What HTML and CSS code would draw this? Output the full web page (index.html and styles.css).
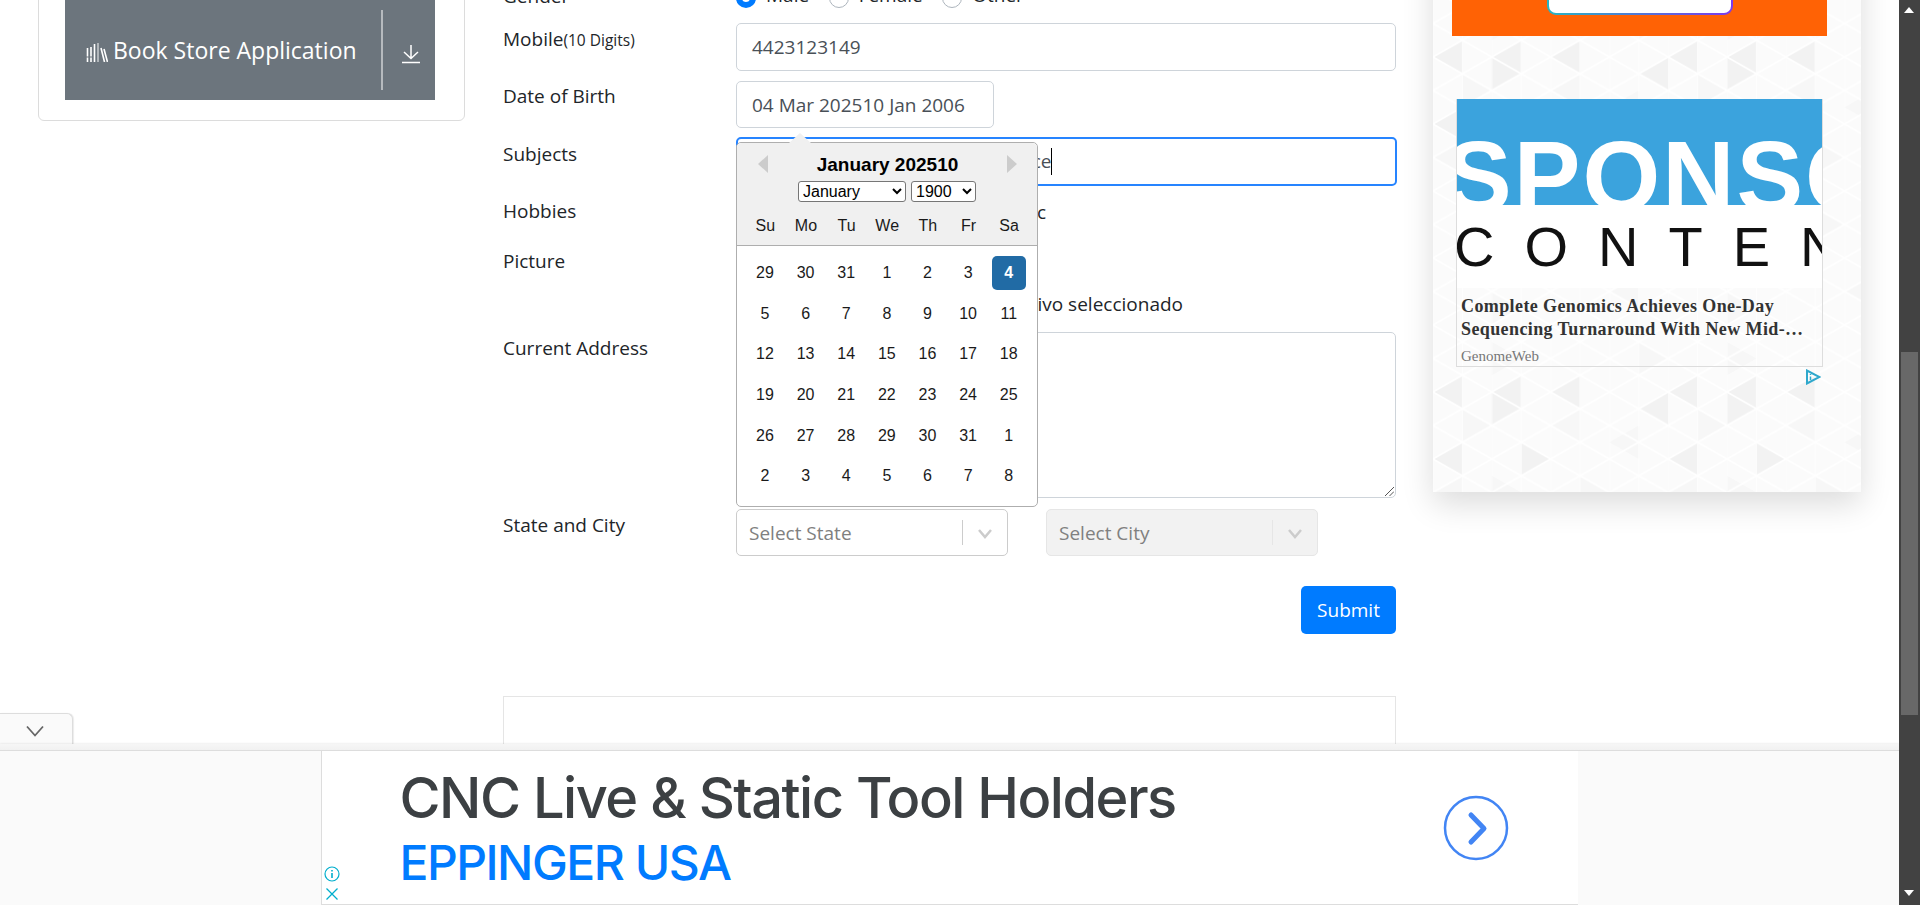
FILE: index.html
```html
<!DOCTYPE html>
<html lang="en">
<head>
<meta charset="utf-8">
<title>Practice Form</title>
<link rel="stylesheet" href="styles.css">
</head>
<body>
<div class="window">
  <div class="viewport">
    <div class="page">
      <aside class="left-col">
        <div class="menu-card">
          <div class="book-item">
            <div class="book-link">
              <svg class="books-icon" viewBox="0 0 22 20" width="22" height="20"><g fill="none" stroke="#fff" stroke-width="1.6"><path d="M1.5 6v14M5 5v15M8.5 2v18"/><path d="M12 1v19" stroke-opacity=".6"/><path d="M15 6l3.5 14M18 7l3.5 13"/><path d="M0 15h6" stroke="#6c757d" stroke-width="1"/></g></svg>
              <span>Book Store Application</span>
            </div>
            <div class="download">
              <svg viewBox="0 0 18 20" width="18" height="20"><path d="M9 1v13M2 8l7 6.500 7-6.500M0 18.500h18" fill="none" stroke="#fff" stroke-width="1.500"/></svg>
            </div>
          </div>
        </div>
      </aside>

      <main class="form-col">
        <div class="row row-gender">
          <label class="label">Gender</label>
          <div class="radios">
            <span class="radio-item"><span class="radio radio-on"></span>Male</span>
            <span class="radio-item"><span class="radio"></span>Female</span>
            <span class="radio-item"><span class="radio"></span>Other</span>
          </div>
        </div>
        <div class="row">
          <label class="label">Mobile<small class="hint">(10 Digits)</small></label>
          <div class="field field-full">4423123149</div>
        </div>
        <div class="row row-dob">
          <label class="label label-tight">Date of Birth</label>
          <div class="dob-wrap">
            <div class="field field-dob">04 Mar 202510 Jan 2006</div>
            <div class="datepicker">
              <span class="dp-caret"></span>
              <div class="dp-head">
                <div class="dp-title-row">
                  <span class="dp-nav dp-prev"></span>
                  <span class="dp-title">January 202510</span>
                  <span class="dp-nav dp-next"></span>
                </div>
                <div class="dp-selects">
                  <select class="dp-month"><option>January</option></select>
                  <select class="dp-year"><option>1900</option></select>
                </div>
                <div class="dp-week">
                  <span>Su</span><span>Mo</span><span>Tu</span><span>We</span><span>Th</span><span>Fr</span><span>Sa</span>
                </div>
              </div>
              <div class="dp-body">
                <span>29</span><span>30</span><span>31</span><span>1</span><span>2</span><span>3</span><span class="dp-selected">4</span>
                <span>5</span><span>6</span><span>7</span><span>8</span><span>9</span><span>10</span><span>11</span>
                <span>12</span><span>13</span><span>14</span><span>15</span><span>16</span><span>17</span><span>18</span>
                <span>19</span><span>20</span><span>21</span><span>22</span><span>23</span><span>24</span><span>25</span>
                <span>26</span><span>27</span><span>28</span><span>29</span><span>30</span><span>31</span><span>1</span>
                <span>2</span><span>3</span><span>4</span><span>5</span><span>6</span><span>7</span><span>8</span>
              </div>
            </div>
          </div>
        </div>
        <div class="row row-subjects">
          <label class="label label-low">Subjects</label>
          <div class="field field-full field-focus"><span class="typed">Science</span><span class="caret"></span></div>
        </div>
        <div class="row row-hobbies">
          <label class="label">Hobbies</label>
          <div class="hobby-list"><span>Sports</span><span>Reading</span><span>Music</span></div>
        </div>
        <div class="row row-picture">
          <label class="label label-tight">Picture</label>
          <div class="file-line"><span>Seleccionar</span><span>Ningún archivo seleccionado</span></div>
        </div>
        <div class="row">
          <label class="label">Current Address</label>
          <div class="field field-full field-area">
            <svg class="grip" viewBox="0 0 10 10" width="10" height="10"><path d="M1 10L10 1M5.500 10L10 5.500" stroke="#555" stroke-width="1" fill="none"/></svg>
          </div>
        </div>
        <div class="row row-state">
          <label class="label">State and City</label>
          <div class="selects">
            <div class="rselect">
              <span class="rselect-text">Select State</span>
              <span class="rselect-sep"></span>
              <svg class="rselect-chevron" viewBox="0 0 20 20" width="20" height="20"><path d="M4 7l6 7 6-7" fill="none" stroke="#ccc" stroke-width="2.500"/></svg>
            </div>
            <div class="rselect rselect-off">
              <span class="rselect-text">Select City</span>
              <span class="rselect-sep"></span>
              <svg class="rselect-chevron" viewBox="0 0 20 20" width="20" height="20"><path d="M4 7l6 7 6-7" fill="none" stroke="#ccc" stroke-width="2.500"/></svg>
            </div>
          </div>
        </div>
        <div class="submit-row"><button class="submit">Submit</button></div>
        <div class="empty-box"></div>
      </main>

      <aside class="ad-card">
        <svg class="pattern" width="100%" height="100%">
          <defs>
            <pattern id="tris" width="235.2" height="335" patternUnits="userSpaceOnUse" patternTransform="translate(0 100)">
              <g fill="#f2f2f2">
                <path d="M0 57L29.400 40.250V73.750z"/>
                <path d="M58.800 57L88.200 40.250V73.750z"/>
                <path d="M117.600 57L147 40.250V73.750z"/>
                <path d="M58.800 57V90.500L88.200 73.750z"/>
                <path d="M205.800 73.750L235.200 57V90.500z"/>
                <path d="M88.200 107.250V140.750L117.600 124z"/>
                <path d="M0 124L29.400 107.250V140.750z"/>
              </g>
              <g fill="#f7f7f7">
                <path d="M58.800 140.750V174.250L88.200 157.500z"/>
                <path d="M0 157.500L29.400 140.750V174.250z"/>
                <path d="M58.800 7V40.250L88.200 23.500z"/>
                <path d="M117.600 90.500L147 73.750V107.250z"/>
                <path d="M176.400 107.250L205.800 90.500V124z"/>
                <path d="M147 140.750V174.250L176.400 157.500z"/>
                <path d="M29.400 207.750L58.800 191V224.500z"/>
                <path d="M205.800 224.500L235.200 207.750V241.250z"/>
                <path d="M117.600 258L147 241.250V274.750z"/>
                <path d="M58.800 291.500V325L88.200 308.250z"/>
                <path d="M176.400 291.500L205.800 274.750V308.250z"/>
                <path d="M29.400 73.750V107.250L58.800 90.500z"/>
                <path d="M147 207.750V241.250L176.400 224.500z"/>
                <path d="M88.200 241.250V274.750L117.600 258z"/>
                <path d="M205.800 7V40.250L235.200 23.500z"/>
              </g>
            </pattern>
            <pattern id="grid" width="58.800" height="33.500" patternUnits="userSpaceOnUse" patternTransform="translate(0 123.500)">
              <path d="M0 0L29.400 16.750L58.800 0M0 33.500L29.400 16.750L58.800 33.500" fill="none" stroke="#fff" stroke-width="1.600"/>
              <path d="M0 0V33.500M29.400 0V33.500" fill="none" stroke="#fff" stroke-width="1" stroke-opacity=".7"/>
            </pattern>
          </defs>
          <rect width="100%" height="100%" fill="url(#tris)"/>
          <rect width="100%" height="100%" fill="url(#grid)"/>
        </svg>
        <div class="orange"><div class="orange-btn"></div></div>
        <div class="sponsored">
          <div class="sp-blue"><span>SPONSO</span></div>
          <div class="sp-white"><span>CONTEN</span></div>
          <div class="sp-text">
            <div class="sp-title">Complete Genomics Achieves One-Day Sequencing Turnaround With New Mid-…</div>
            <div class="sp-source">GenomeWeb</div>
          </div>
        </div>
        <div class="adchoice">
          <svg viewBox="0 0 16 16" width="16" height="16"><path d="M2 1.500V14.500L14.500 8z" fill="none" stroke="#2fa8cc" stroke-width="2"/><path d="M5.500 7.500V11M5.500 5v1" stroke="#2fa8cc" stroke-width="1.500" fill="none"/></svg>
        </div>
      </aside>
    </div>

    <div class="bottom-ad">
      <div class="ad-tab">
        <svg viewBox="0 0 20 12" width="20" height="12"><path d="M2 1.500l8 9 8-9" fill="none" stroke="#666" stroke-width="1.800"/></svg>
      </div>
      <div class="ad-strip"></div>
      <div class="ad-bar">
        <div class="ad-banner">
          <div class="ad-marks">
            <svg viewBox="0 0 16 16" width="16" height="16"><circle cx="8" cy="8" r="7" fill="none" stroke="#00aecd" stroke-width="1.200"/><path d="M8 7v5M8 4v1.600" stroke="#00aecd" stroke-width="1.600" fill="none"/></svg>
            <svg viewBox="0 0 14 14" width="14" height="14"><path d="M1.500 1.500l11 11M12.500 1.500l-11 11" stroke="#00aecd" stroke-width="1.300" fill="none"/></svg>
          </div>
          <div class="ad-copy">
            <div class="ad-head">CNC Live &amp; Static Tool Holders</div>
            <div class="ad-brand">EPPINGER USA</div>
          </div>
          <svg class="ad-go" viewBox="0 0 66 66" width="66" height="66"><circle cx="33" cy="33" r="31" fill="none" stroke="#4285f4" stroke-width="2.500"/><path d="M28 20l13 13.500L28 47" fill="none" stroke="#4285f4" stroke-width="5" stroke-linecap="round" stroke-linejoin="round"/></svg>
        </div>
      </div>
    </div>
  </div>

  <div class="scrollbar">
    <span class="sb-up"></span>
    <div class="sb-track"><div class="sb-thumb"></div></div>
    <span class="sb-down"></span>
  </div>
</div>
</body>
</html>
```

FILE: styles.css
```css
* { box-sizing: border-box; }
html, body { margin: 0; height: 905px; overflow: hidden; }
body { font-family: "Open Sans", "Noto Sans", sans-serif; font-size: 19px; line-height: 30px; color: #212529; background: #fff; }

.window { display: flex; width: 1920px; height: 905px; }
.viewport { position: relative; flex: 1; overflow: hidden; }
.page { display: flex; align-items: flex-start; gap: 38px; padding-left: 38px; margin-top: -100px; }

/* left menu */
.left-col { width: 427px; flex: none; }
.menu-card { height: 221px; padding: 0 29px 20px 26px; border: 1px solid #dcdcdc; border-radius: 6px; background: #fff; }
.book-item { display: flex; height: 199px; padding-top: 100px; background: #6c757d; color: #fff; }
.book-link { display: flex; align-items: center; gap: 5px; width: 316px; padding: 0 0 2px 21px; font-size: 23px; }
.books-icon { margin-top: 5px; flex: none; }
.download { display: flex; align-items: center; justify-content: center; flex: 1; height: 80px; margin-top: 9px; border-left: 2px solid #b6babe; }
.download svg { margin-top: 7px; margin-left: 4px; }

/* form */
.form-col { width: 893px; flex: none; padding-top: 80px; }
.row { display: flex; margin-bottom: 10px; }
.label { width: 233px; flex: none; padding-top: 1px; white-space: nowrap; }
.label-tight { padding-top: 0; }
.label-low { padding-top: 2px; }
.hint { font-size: 15.500px; }
.row-gender { height: 33px; }
.radios { display: flex; }
.radio-item { display: flex; align-items: center; gap: 10px; height: 30px; margin-right: 19.500px; }
.radio { width: 20px; height: 20px; margin-top: 5px; border: 1px solid #adb5bd; border-radius: 50%; background: #fff; }
.radio-on { border: 6px solid #007bff; }

.field { height: 47.500px; padding: 8px 15px; border: 1px solid #ced4da; border-radius: 5px; color: #495057; background: #fff; }
.field-full { width: 660px; flex: none; }
.field-dob { width: 258px; white-space: nowrap; }
.row-dob { margin-bottom: 9px; }
.dob-wrap { position: relative; }
.field-focus { display: flex; justify-content: flex-start; width: 661px; height: 49px; padding: 7px 0 7px 247px; border: 2px solid #2684ff; }
.caret { width: 1px; height: 27px; margin-top: 2px; background: #000; }
.row-hobbies { height: 41px; margin-top: -1px; }
.hobby-list { display: flex; justify-content: space-between; width: 310px; padding-top: 2px; }
.row-picture { height: 76px; }
.file-line { display: flex; justify-content: space-between; align-items: flex-end; width: 447px; height: 73px; }
.field-area { position: relative; height: 166px; }
.grip { position: absolute; right: 1px; bottom: 1px; }

.row-state { margin-top: 11px; margin-bottom: 30px; }
.selects { display: flex; gap: 38px; }
.rselect { display: flex; align-items: center; width: 272px; height: 47px; padding-left: 12px; border: 1px solid #ccc; border-radius: 5px; background: #fff; }
.rselect-text { flex: 1; color: #808080; }
.rselect-sep { width: 1px; height: 25px; background: #ccc; }
.rselect-chevron { margin: 0 12px; }
.rselect-off { background: #f2f2f2; border-color: #e6e6e6; }
.rselect-off .rselect-sep { background: #e6e6e6; }

.submit-row { display: flex; justify-content: flex-end; }
.submit { width: 95px; height: 47.500px; padding: 0; border: 0; border-radius: 5px; background: #007bff; color: #fff; font: inherit; }
.empty-box { height: 240px; margin-top: 62px; border: 1px solid #e5e5e5; }

/* date picker */
.datepicker { position: absolute; top: 61px; left: 0; z-index: 5; width: 302px; border: 1px solid #aeaeae; border-radius: 5px; background: #fff; font-family: "Liberation Sans", Arial, sans-serif; font-size: 16px; line-height: 20px; color: #1a1a1a; }
.dp-caret { position: absolute; top: -10px; left: 52px; width: 0; height: 0; border-left: 11px solid transparent; border-right: 11px solid transparent; border-bottom: 10px solid #f0f0f0; }
.dp-head { height: 103px; padding-top: 10px; background: #f0f0f0; border-bottom: 1px solid #aeaeae; border-radius: 5px 5px 0 0; }
.dp-title-row { display: flex; justify-content: space-between; align-items: center; padding: 0 20px 0 21px; height: 24px; }
.dp-title { font-size: 19px; font-weight: 700; color: #000; padding-top: 1px; }
.dp-nav { width: 0; height: 0; border-top: 9px solid transparent; border-bottom: 9px solid transparent; margin-top: -2px; }
.dp-prev { border-right: 10px solid #ccc; }
.dp-next { border-left: 10px solid #ccc; }
.dp-selects { display: flex; justify-content: center; gap: 5px; margin-top: 4px; }
.dp-selects select { height: 21px; padding: 0; font-family: inherit; font-size: 16px; background: #fff; border: 1px solid #767676; border-radius: 3px; color: #000; }
.dp-month { width: 108px; }
.dp-year { width: 65px; }
.dp-week { display: grid; grid-template-columns: repeat(7, 40.640px); padding: 0 8px; margin-top: 14px; text-align: center; }
.dp-body { display: grid; grid-template-columns: repeat(7, 34px); grid-auto-rows: 34px; align-content: start; gap: 6.640px; padding: 10.500px 11px 9px; height: 260px; text-align: center; line-height: 34px; }
.dp-selected { background: #216ba5; color: #fff; font-weight: 700; border-radius: 5px; }

/* right ad column */
.ad-card { position: relative; width: 428px; height: 592px; flex: none; margin-left: -1px; background: #fbfbfb; box-shadow: 0 12px 30px rgba(0,0,0,.14); }
.pattern { position: absolute; inset: 0; }
.orange { position: relative; display: flex; justify-content: center; width: 375px; height: 136px; margin-left: 19px; background: #ff6205; }
.orange-btn { width: 186px; height: 115px; border: 2px solid transparent; border-top: 0; border-radius: 0 0 9px 9px; background: linear-gradient(#fff, #fff) padding-box, linear-gradient(90deg, #28b5c2, #7c3aed) border-box; }
.sponsored { position: relative; width: 367px; height: 268px; margin: 63px 0 0 23px; border: 1px solid #ddd; border-top: 0; font-family: "Liberation Serif", serif; }
.sp-blue { height: 106px; padding-top: 27px; overflow: hidden; background: #3ba3dd; color: #fff; font: 700 100px/1 "Liberation Sans", sans-serif; letter-spacing: 2px; white-space: nowrap; }
.sp-blue span { margin-left: -12px; display: inline-block; }
.sp-white { height: 83px; overflow: hidden; background: #fff; color: #111; font: 400 56px/1 "Liberation Sans", sans-serif; letter-spacing: 30px; white-space: nowrap; padding-top: 14px; }
.sp-white span { display: inline-block; margin-left: -3px; }
.sp-text { padding: 7px 4px 0 4px; }
.sp-title { font-size: 18px; font-weight: 700; line-height: 23px; color: #333; letter-spacing: .4px; }
.sp-source { margin-top: 5px; font-size: 15px; line-height: 20px; color: #777; }
.adchoice { position: relative; display: flex; justify-content: flex-end; width: 388px; margin-top: 2px; line-height: 0; }

/* bottom ad */
.bottom-ad { position: absolute; left: 0; right: 0; bottom: 0; height: 192px; }
.ad-tab { display: flex; justify-content: center; align-items: center; width: 73px; height: 31px; padding: 3px 3px 0 0; border: 1px solid #ddd; border-width: 1px 1px 0 0; border-radius: 0 6px 0 0; background: #fafafa; box-shadow: 1px 0 1px rgba(0,0,0,.08); }
.ad-strip { height: 6px; background: linear-gradient(#f6f6f6, #f1f1f1); box-shadow: 0 -1px 2px rgba(0,0,0,.06); }
.ad-bar { display: flex; justify-content: center; height: 155px; padding-right: 1px; border-top: 1px solid #ddd; background: #fafafa; }
.ad-banner { position: relative; display: flex; align-items: center; width: 1257px; height: 154px; padding-left: 78px; border-left: 1px solid #ddd; border-bottom: 1px solid #ddd; background: #fff; }
.ad-marks { position: absolute; left: 1px; bottom: 3px; display: flex; flex-direction: column; align-items: center; gap: 5px; width: 18px; line-height: 0; }
.ad-copy { flex: none; width: 1043px; padding-bottom: 2px; }
.ad-head { font-family: Inter, sans-serif; font-weight: 500; font-size: 56px; line-height: 72px; color: #3c4043; letter-spacing: -1.500px; white-space: nowrap; }
.ad-brand { font-family: Inter, sans-serif; font-weight: 500; font-size: 48px; line-height: 58px; color: #007bff; letter-spacing: -1.500px; white-space: nowrap; }
.ad-go { flex: none; }

/* scrollbar */
.scrollbar { position: relative; width: 21px; flex: none; display: flex; flex-direction: column; align-items: center; background: #424242; }
.sb-track { flex: 1; width: 100%; padding: 352px 2px 0 2px; }
.sb-thumb { width: 17px; height: 363px; background: #686868; }
.sb-up, .sb-down { position: absolute; left: 5px; width: 0; height: 0; border-left: 5px solid transparent; border-right: 5px solid transparent; }
.sb-up { top: 7px; border-bottom: 6px solid #fff; }
.sb-down { bottom: 9px; border-top: 6px solid #fff; }
```
